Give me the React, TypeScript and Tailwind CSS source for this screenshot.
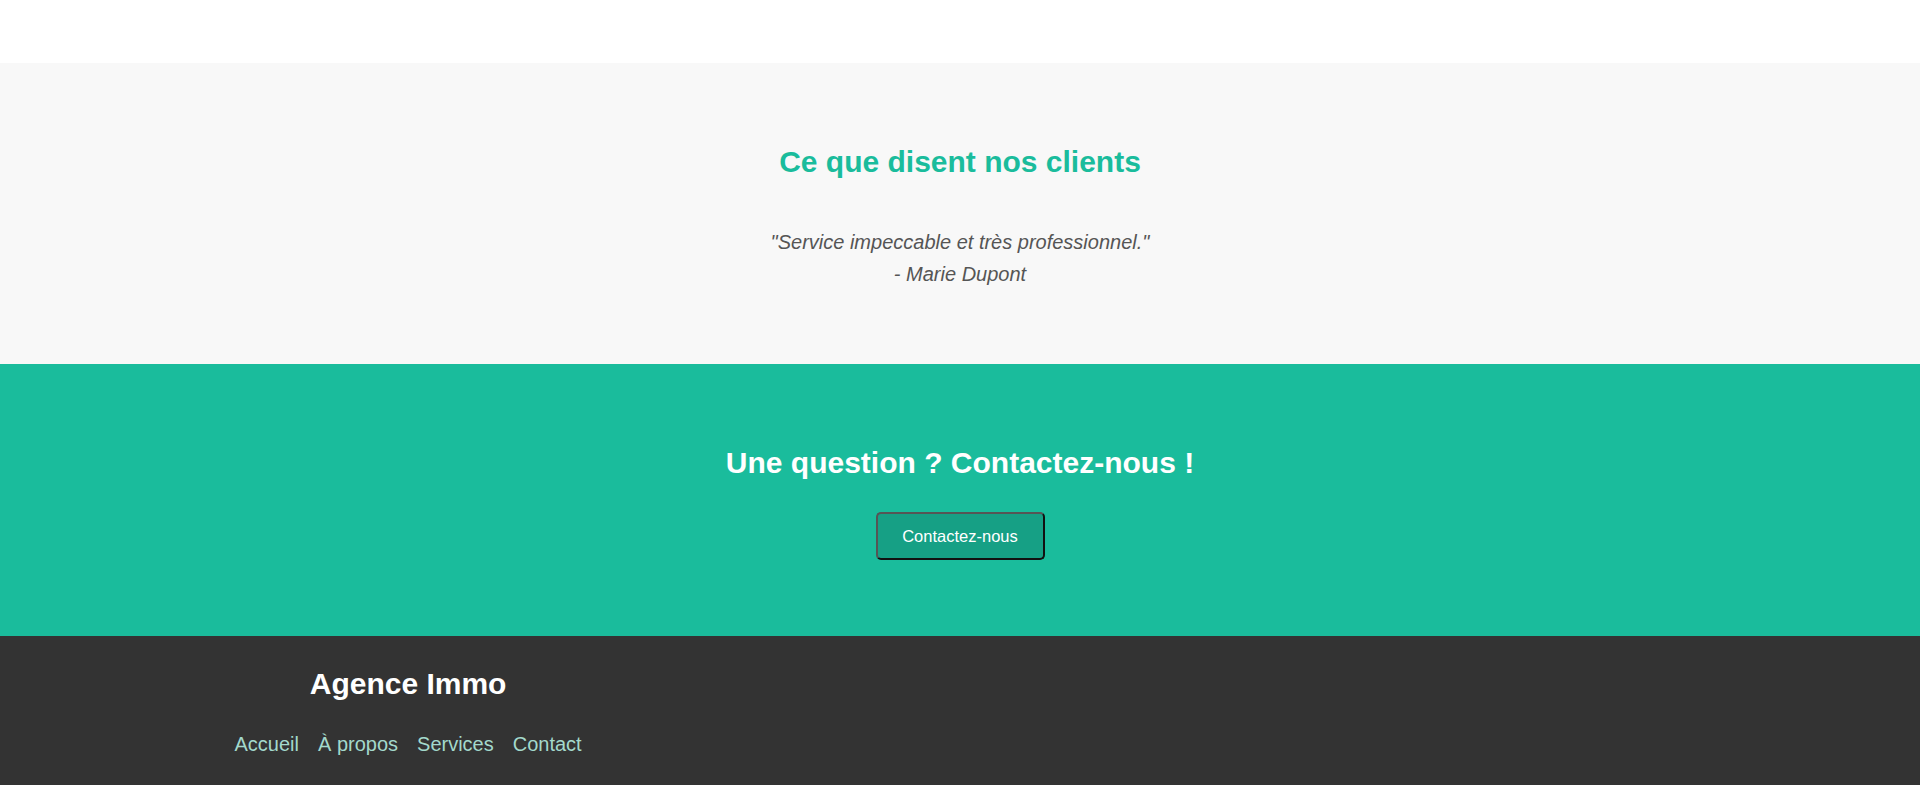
import React from 'react';

const font = { fontFamily: '"Liberation Sans", Arial, sans-serif' };

const links = ['Accueil', 'À propos', 'Services', 'Contact'];

const Testimonials: React.FC = () => (
  <section className="bg-[#f8f8f8] pt-[81px] pb-[74px] text-center">
    <h2 className="text-[30px] leading-[35px] font-bold text-[#1abc9c]">Ce que disent nos clients</h2>
    <div className="mt-[47px] text-[20px] leading-[32px] italic text-[#555555]">
      <p>"Service impeccable et très professionnel."</p>
      <p>- Marie Dupont</p>
    </div>
  </section>
);

const ContactBanner: React.FC = () => (
  <section className="bg-[#1abc9c] pt-[81px] pb-[76px] text-center">
    <h2 className="text-[30px] leading-[35px] font-bold text-white">Une question ? Contactez-nous !</h2>
    <button className="mt-[32px] h-[48px] w-[169px] rounded-[5px] border-2 border-t-[#555555] border-l-[#555555] border-r-[#111111] border-b-[#111111] bg-[#16a085] text-[16.5px] text-white">
      Contactez-nous
    </button>
  </section>
);

const Footer: React.FC = () => (
  <footer className="bg-[#333333] pt-[30px] pb-[30px] pl-[225px]">
    <div className="inline-flex flex-col items-center">
      <h3 className="text-[30px] leading-[35px] font-bold text-white">Agence Immo</h3>
      <nav className="mt-[32px] flex text-[20px] leading-[23px] text-[#a3d9cc]">
        {links.map((l) => (
          <a key={l} href="#" className="mx-[9.5px]">
            {l}
          </a>
        ))}
      </nav>
    </div>
  </footer>
);

export default function App() {
  return (
    <div style={font} className="min-h-screen bg-white">
      <div className="h-[63px] bg-white" />
      <Testimonials />
      <ContactBanner />
      <Footer />
    </div>
  );
}
